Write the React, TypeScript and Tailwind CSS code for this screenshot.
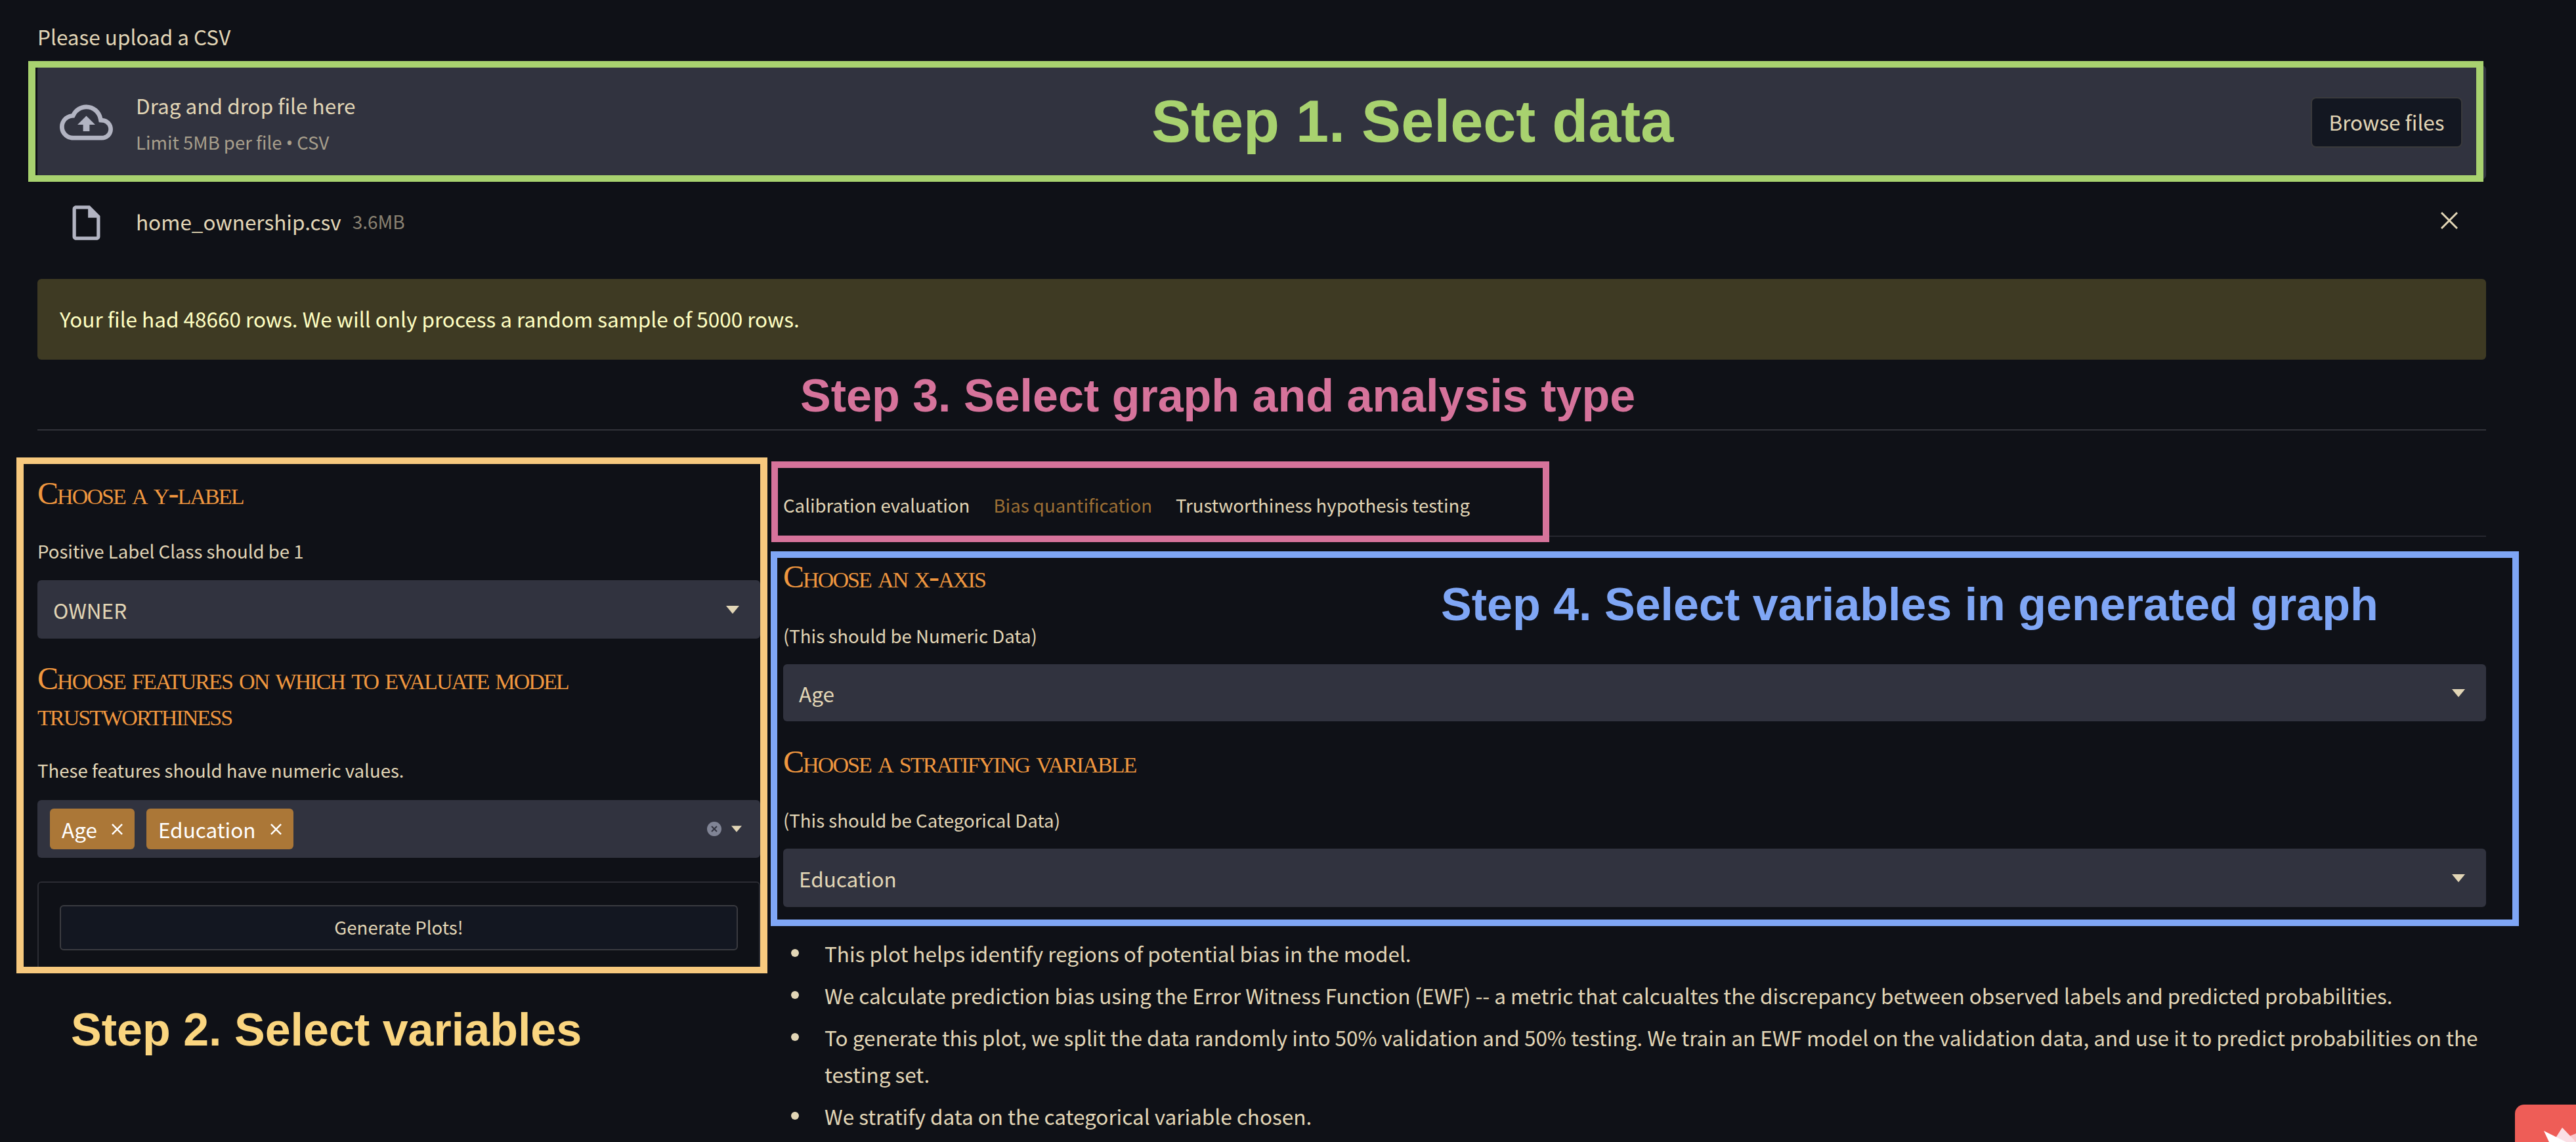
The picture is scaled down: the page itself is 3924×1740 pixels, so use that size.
import React from 'react';

const Caret = ({ className }: { className: string }) => (
  <svg viewBox="0 0 20 12" className={className} fill="#e2d6b6">
    <path d="M0 0h20L10.6 11.4a.8.8 0 0 1-1.2 0z" />
  </svg>
);

const Heading = ({ children }: { children: React.ReactNode }) => (
  <h3 className="font-['Liberation_Serif',serif] text-[48px] leading-[55px] font-normal tracking-[-1.9px] text-[#f0973f] [font-variant:small-caps]">
    {children}
  </h3>
);

const Select = ({ value, tall }: { value: string; tall?: boolean }) => (
  <div
    className={`flex items-center justify-between rounded-[6px] bg-[#31333f] pl-[24px] pr-[32px] ${
      tall ? 'h-[89px]' : 'h-[87px]'
    }`}
  >
    <span className="text-[#e2d6b6]">{value}</span>
    <Caret className="h-[12px] w-[20px]" />
  </div>
);

const Chip = ({ label }: { label: string }) => (
  <div className="flex h-[62px] items-center gap-[22px] rounded-[6px] bg-[#ab7737] px-[18px] text-white">
    <span>{label}</span>
    <svg viewBox="0 0 18 18" className="h-[17px] w-[17px]" stroke="#fff" strokeWidth="2.6">
      <path d="M1 1l16 16M17 1L1 17" />
    </svg>
  </div>
);

const Bullet = ({ children }: { children: React.ReactNode }) => (
  <li className="mb-[8px] flex gap-[39px]">
    <span className="mt-[22px] h-[12px] w-[12px] shrink-0 rounded-full bg-[#e2d6b6]" />
    <span>{children}</span>
  </li>
);

const App = () => {
  return (
    <div className="relative h-[1740px] w-[3924px] overflow-hidden bg-[#0f1117] font-['Noto_Sans_CJK_SC',sans-serif] text-[31.5px] leading-[56px] text-[#e2d6b6]">
      <main className="ml-[57px] w-[3730px] pt-[27px]">
        <p className="h-[56px]">Please upload a CSV</p>

        {/* Uploader */}
        <section className="mt-[17px] flex h-[173px] items-center justify-between rounded-[6px] bg-[#31333f] pl-[34px] pr-[36px]">
          <div className="flex items-center gap-[35px]">
            <svg viewBox="0 0 24 24" className="h-[81px] w-[81px]" fill="#b2b4c2">
              <path d="M19.35 10.04C18.67 6.59 15.64 4 12 4 9.11 4 6.6 5.64 5.35 8.04 2.34 8.36 0 10.91 0 14c0 3.31 2.69 6 6 6h13c2.76 0 5-2.24 5-5 0-2.64-2.05-4.78-4.65-4.96zM19 18H6c-2.21 0-4-1.79-4-4 0-2.05 1.53-3.76 3.56-3.97l1.07-.11.5-.95C8.08 7.14 9.94 6 12 6c2.62 0 4.88 1.86 5.39 4.43l.3 1.5 1.53.11c1.56.1 2.78 1.41 2.78 2.96 0 1.65-1.35 3-3 3zM8 13h2.55v3h2.9v-3H16l-4-4z" />
            </svg>
            <div className="mt-[5px]">
              <p>Drag and drop file here</p>
              <p className="text-[27.5px] text-[#a89f8c]">
                Limit 5MB per file <span className="font-['Noto_Sans',sans-serif]">•</span> CSV
              </p>
            </div>
          </div>
          <button className="h-[77px] w-[231px] rounded-[8px] border-2 border-[#3a3a3c] bg-[#131721] pb-[4px] text-[#e2d6b6]">
            Browse files
          </button>
        </section>

        {/* Uploaded file */}
        <div className="mt-[35px] flex h-[62px] items-center justify-between pl-[43px] pr-[43px]">
          <div className="flex items-center">
            <svg viewBox="0 0 24 24" className="h-[63px] w-[63px]" fill="#b2b4c2">
              <path d="M14 2H6c-1.1 0-1.99.9-1.99 2L4 20c0 1.1.89 2 1.99 2H18c1.1 0 2-.9 2-2V8l-6-6zM6 20V4h7v5h5v11H6z" />
            </svg>
            <span className="mb-[5px] ml-[44px]">home_ownership.csv</span>
            <span className="mb-[5px] ml-[17px] text-[28px] text-[#8a8272]">3.6MB</span>
          </div>
          <svg viewBox="0 0 26 26" className="mb-[6px] h-[26px] w-[26px]" stroke="#e2d6b6" strokeWidth="3">
            <path d="M1 1l24 24M25 1L1 25" />
          </svg>
        </div>

        {/* Warning */}
        <div className="mt-[55px] flex h-[123px] items-center rounded-[6px] bg-[#3e3a23] px-[34px] pb-[4px] text-[#ffffc2]">
          Your file had 48660 rows. We will only process a random sample of 5000 rows.
        </div>

        <hr className="mt-[106px] h-[2px] border-0 bg-[#32333a]" />

        <div className="flex gap-[35px]">
          {/* Left column */}
          <div className="w-[1101px] shrink-0 pt-[68px] text-[27.6px]">
            <Heading>Choose a y-label</Heading>
            <p className="mt-[32px]">Positive Label Class should be 1</p>
            <div className="mt-[17px] text-[31.5px]">
              <Select value="OWNER" tall />
            </div>
            <div className="mt-[33px]">
              <Heading>Choose features on which to evaluate model trustworthiness</Heading>
            </div>
            <p className="mt-[29px]">These features should have numeric values.</p>
            <div className="mt-[18px] flex h-[88px] items-center gap-[18px] rounded-[6px] bg-[#31333f] pl-[19px] pr-[28px] text-[31.5px]">
              <Chip label="Age" />
              <Chip label="Education" />
              <div className="ml-auto flex items-center gap-[15px]">
                <svg viewBox="0 0 22 22" className="h-[22px] w-[22px]">
                  <circle cx="11" cy="11" r="11" fill="#808495" />
                  <path d="M7 7l8 8M15 7l-8 8" stroke="#31333f" strokeWidth="2" />
                </svg>
                <Caret className="h-[10px] w-[16px]" />
              </div>
            </div>
            <div className="mt-[36px] rounded-[6px] border-2 border-[#2b2c33] px-[32px] pb-[32px] pt-[34px]">
              <button className="h-[69px] w-full rounded-[6px] border-2 border-[#3a3b40] bg-[#131721] pb-[3px] text-[#e2d6b6]">
                Generate Plots!
              </button>
            </div>
          </div>

          {/* Right column */}
          <div className="min-w-0 flex-1 pt-[85px]">
            <div className="flex h-[77px] gap-[36px] border-b-2 border-[#26272f] pb-[19px] text-[27.6px]">
              <span>Calibration evaluation</span>
              <span className="text-[#9c6f34]">Bias quantification</span>
              <span>Trustworthiness hypothesis testing</span>
            </div>
            <div className="mt-[33px]">
              <Heading>Choose an x-axis</Heading>
            </div>
            <p className="mt-[34px] text-[27.6px]">(This should be Numeric Data)</p>
            <div className="mt-[16px]">
              <Select value="Age" />
            </div>
            <div className="mt-[34px]">
              <Heading>Choose a stratifying variable</Heading>
            </div>
            <p className="mt-[33px] text-[27.6px]">(This should be Categorical Data)</p>
            <div className="mt-[16px]">
              <Select value="Education" tall />
            </div>
            <ul className="ml-[12px] mt-[42px]">
              <Bullet>This plot helps identify regions of potential bias in the model.</Bullet>
              <Bullet>
                We calculate prediction bias using the Error Witness Function (EWF) -- a metric that calcualtes the discrepancy between observed labels and predicted probabilities.
              </Bullet>
              <Bullet>
                To generate this plot, we split the data randomly into 50% validation and 50% testing. We train an EWF model on the validation data, and use it to predict probabilities on the testing set.
              </Bullet>
              <Bullet>We stratify data on the categorical variable chosen.</Bullet>
            </ul>
          </div>
        </div>
      </main>

      {/* Annotations drawn over the app */}
      <div className="absolute left-[43px] top-[93px] h-[184px] w-[3740px] border-[10px] border-x-[11px] border-[#a8d26f]" />
      <div className="absolute left-[25px] top-[697px] h-[786px] w-[1144px] border-[10px] border-x-[11px] border-[#f7c97e]" />
      <div className="absolute left-[1175px] top-[703px] h-[123px] w-[1185px] border-[10px] border-[#d6739b]" />
      <div className="absolute left-[1174px] top-[840px] h-[571px] w-[2663px] border-[10px] border-[#7fa6f5]" />

      <p className="absolute left-[1754px] top-[130px] font-['Liberation_Sans',sans-serif] text-[90px] leading-[110px] font-bold text-[#a8d26f]">Step 1. Select data</p>
      <p className="absolute left-[108px] top-[1524px] font-['Liberation_Sans',sans-serif] text-[70px] leading-[90px] font-bold text-[#fad57f]">Step 2. Select variables</p>
      <p className="absolute left-[1219px] top-[558px] font-['Liberation_Sans',sans-serif] text-[70px] leading-[90px] font-bold text-[#d6739b]">Step 3. Select graph and analysis type</p>
      <p className="absolute left-[2195px] top-[876px] font-['Liberation_Sans',sans-serif] text-[70px] leading-[90px] font-bold text-[#7fa6f5]">Step 4. Select variables in generated graph</p>

      {/* Corner badge */}
      <div className="absolute bottom-0 right-0 h-[57px] w-[93px] overflow-hidden rounded-tl-[14px] bg-[#ee5d57]">
        <svg viewBox="0 0 93 57" className="h-[57px] w-[93px]">
          <path d="M62 57L93 44v13z" fill="#f9c6ca" />
          <path d="M58 57l14-22 21 22z" fill="#fbdfe5" />
          <path d="M44 40l34 17H52z" fill="#ffffff" />
        </svg>
      </div>
    </div>
  );
};

export default App;
